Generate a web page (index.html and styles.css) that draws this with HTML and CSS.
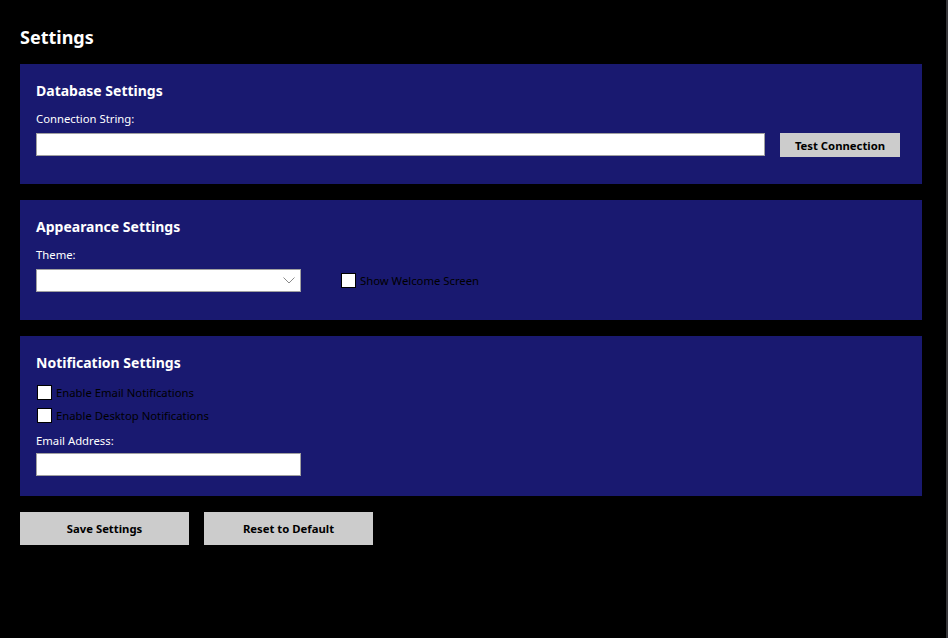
FILE: index.html
```html
<!DOCTYPE html>
<html>
<head>
<meta charset="utf-8">
<link rel="stylesheet" href="styles.css">
</head>
<body>
<div class="page">
  <h1 class="title">Settings</h1>

  <section class="panel panel-db">
    <h2 class="panel-title">Database Settings</h2>
    <div class="label">Connection String:</div>
    <div class="row">
      <div class="textbox textbox-wide"></div>
      <div class="btn btn-test">Test Connection</div>
    </div>
  </section>

  <section class="panel panel-app">
    <h2 class="panel-title">Appearance Settings</h2>
    <div class="label">Theme:</div>
    <div class="row row-center">
      <div class="textbox select">
        <svg class="chev" width="12" height="7" viewBox="0 0 12 7"><path d="M0.5 0.5 L6 6 L11.5 0.5" fill="none" stroke="#8a8a8a" stroke-width="1"/></svg>
      </div>
      <div class="check check-welcome"><span class="box"></span><span class="check-text">Show Welcome Screen</span></div>
    </div>
  </section>

  <section class="panel panel-notif">
    <h2 class="panel-title">Notification Settings</h2>
    <div class="check check-first"><span class="box"></span><span class="check-text">Enable Email Notifications</span></div>
    <div class="check check-second"><span class="box"></span><span class="check-text">Enable Desktop Notifications</span></div>
    <div class="label label-email">Email Address:</div>
    <div class="textbox textbox-short"></div>
  </section>

  <div class="actions">
    <div class="btn btn-big">Save Settings</div>
    <div class="btn btn-big">Reset to Default</div>
  </div>
</div>
</body>
</html>
```

FILE: styles.css
```css
* { box-sizing: border-box; }
html, body {
  margin: 0;
  padding: 0;
  width: 948px;
  height: 638px;
  background: #000;
  overflow: hidden;
}
body {
  border-right: 2px solid #36363a;
  font-family: "Noto Sans", "Open Sans", sans-serif;
  color: #fff;
}
.page {
  padding: 24px 0 0 20px;
}
.title {
  margin: 0;
  font-size: 18px;
  font-weight: 700;
  line-height: 26px;
  height: 40px;
}
.panel {
  width: 902px;
  background: #191970;
  padding: 17px 16px 0 16px;
  margin-bottom: 16px;
}
.panel-db, .panel-app { height: 120px; }
.panel-notif { height: 160px; }
.panel-title {
  margin: 0;
  font-size: 14px;
  font-weight: 700;
  line-height: 20px;
  height: 30px;
}
.label {
  font-size: 11.3px;
  line-height: 16px;
  height: 22px;
}
.row {
  display: flex;
  align-items: flex-start;
}
.row-center { align-items: center; }
.textbox {
  height: 23px;
  background: #fff;
  border: 1px solid #a0a0a0;
}
.textbox-wide { width: 729px; margin-right: 15px; }
.textbox-short { width: 265px; }
.select {
  width: 265px;
  position: relative;
  margin-right: 40px;
}
.chev {
  position: absolute;
  right: 5px;
  top: 7px;
}
.btn {
  background: #cccccc;
  color: #000;
  font-weight: 700;
  font-size: 11.3px;
  display: flex;
  align-items: center;
  justify-content: center;
}
.btn-test {
  width: 120px;
  height: 24px;
}
.check {
  display: flex;
  align-items: center;
  color: #000;
  font-size: 11.3px;
  line-height: 15px;
}
.box {
  width: 15px;
  height: 15px;
  background: #fff;
  border: 1px solid #000;
  margin-right: 4px;
}
.check-welcome { margin-top: -1px; }
.check-first { margin-left: 1px; margin-top: 2px; }
.check-second { margin-left: 1px; margin-top: 8px; }
.label-email { margin-top: 10px; height: 20px; }
.actions {
  display: flex;
  gap: 15px;
}
.btn-big {
  width: 169px;
  height: 33px;
}
```
